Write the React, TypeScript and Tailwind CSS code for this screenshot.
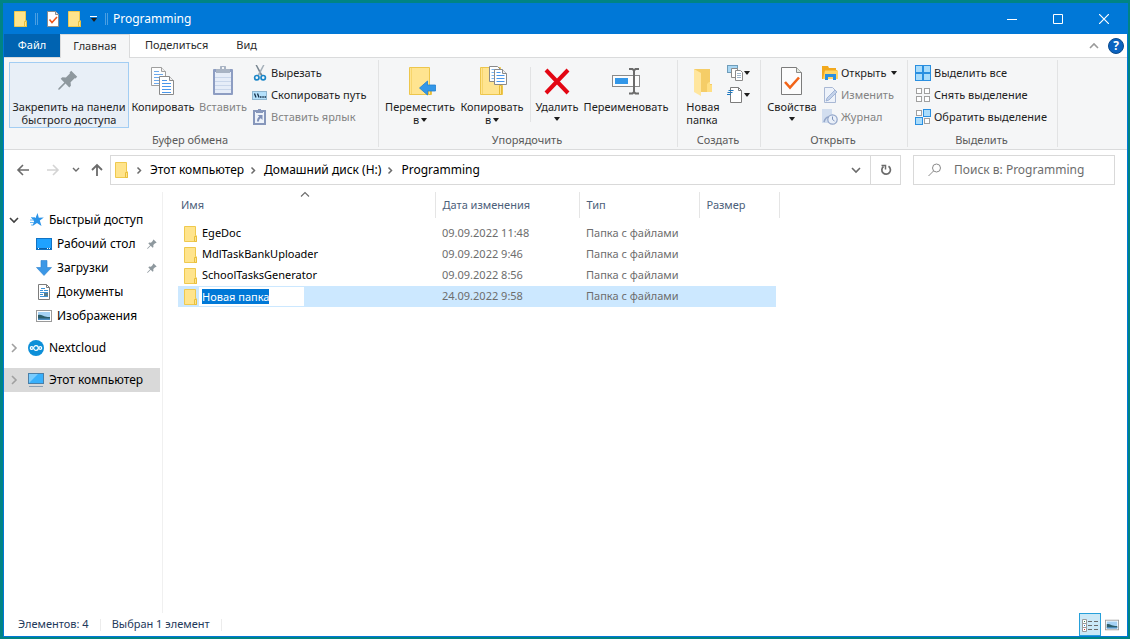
import { useEffect, useRef, type ReactNode } from "react";
import clsx from "clsx";

type IconProps = { className?: string };

const FolderIcon = ({ className = "w-4 h-4" }: IconProps) => (
  <svg viewBox="0 0 16 16" className={clsx("shrink-0", className)}>
    <path d="M1.5.5h11v9.3h1v5.7h-12z" fill="#ffe48c" stroke="#efc94e" />
    <path d="M11.5 15.5v-5h2v5z" fill="#ffe48c" stroke="#e9bf3c" />
  </svg>
);

const CheckDocIcon = ({ className = "w-4 h-4" }: IconProps) => (
  <svg viewBox="0 0 16 16" className={clsx("shrink-0", className)}>
    <path d="M2.5.5h8l3 3v12h-11z" fill="#fff" stroke="#8c8c8c" />
    <path d="M10.5.5v3h3" fill="#e8e8e8" stroke="#8c8c8c" />
    <path d="M4.5 8.5l2.5 3 5-5.5" fill="none" stroke="#f0551a" strokeWidth="1.6" />
  </svg>
);

const CaretDown = ({ className = "text-[#1e1e1e]" }: IconProps) => (
  <svg viewBox="0 0 6 4" className={clsx("w-[6px] h-1 shrink-0", className)}>
    <path d="M0 0h6L3.5 3.5h-1z" fill="currentColor" />
  </svg>
);

const Chevron = ({ className }: IconProps) => (
  <svg viewBox="0 0 10 10" className={clsx("w-[10px] h-[10px] shrink-0", className)}>
    <path d="M3 1l4 4-4 4" fill="none" stroke="currentColor" strokeWidth="1.6" />
  </svg>
);

const CrumbArrow = () => (
  <svg viewBox="0 0 10 10" className="w-[10px] h-[10px] mx-[5px] shrink-0 text-[#6b6b6b]">
    <path d="M2.5 2.5l3 3-3 3" fill="none" stroke="currentColor" strokeWidth="1.5" />
  </svg>
);

const PinShape = () => (
  <path
    d="M13.2.8l6 6-1.7 1.6-.9-.2-4 4 .3 3.6-1.6 1.6-3.8-3.8L1.6 19.4.2 19.7l.3-1.4 5.8-5.9-3.6-3.6 1.6-1.6 3.6.3 4-4-.3-1z"
    fill="#8e989e"
  />
);

const PinIcon = () => (
  <svg viewBox="0 0 32 32" className="w-8 h-8">
    <g transform="translate(5 4)">
      <PinShape />
    </g>
  </svg>
);

const SmallPinIcon = () => (
  <svg viewBox="0 0 20 20" className="w-[10px] h-[10px] shrink-0">
    <PinShape />
  </svg>
);

// one sheet with blue text lines, used twice by the copy icon
const Sheet = ({ x, y }: { x: number; y: number }) => (
  <g transform={`translate(${x} ${y})`}>
    <path d="M.5.5h10l4 4v14h-14z" fill="#fff" stroke="#8a8a8a" />
    <path d="M10.5.5v4h4" fill="#eee" stroke="#8a8a8a" />
    <path d="M3 4.5h5M3 7.5h9M3 10.5h9M3 13.5h9M3 16.5h9" stroke="#4a97ea" />
  </g>
);

const CopyIcon = () => (
  <svg viewBox="0 0 32 32" className="w-8 h-8">
    <g opacity=".8">
      <Sheet x={4} y={1} />
    </g>
    <Sheet x={12} y={10} />
  </svg>
);

const PasteIcon = () => (
  <svg viewBox="0 0 32 32" className="w-8 h-8">
    <rect x="6" y="3" width="20" height="26" rx="1" fill="#8d9dc2" />
    <rect x="8" y="6" width="16" height="21" fill="#e6edf8" />
    <path d="M8 11.5h16M8 15.5h16M8 19.5h16M8 23.5h16" stroke="#c9d6ea" />
    <path d="M9 3h4V1.5a2 2 0 0 1 6 0V3h4v4H9z" fill="#a9b4c4" />
    <rect x="15" y="1" width="2" height="2" fill="#f5f6f7" />
  </svg>
);

const ScissorsIcon = () => (
  <svg viewBox="0 0 16 16" className="w-4 h-4">
    <path d="M3.5 0H5l5.500 10L9 11z" fill="#76838e" />
    <path d="M12.500 0H11L5.500 10 7 11z" fill="#a3aeb8" />
    <circle cx="4.800" cy="12.700" r="2.200" fill="none" stroke="#1a86c8" strokeWidth="1.7" />
    <circle cx="11.200" cy="12.700" r="2.200" fill="none" stroke="#1a86c8" strokeWidth="1.7" />
  </svg>
);

const CopyPathIcon = () => (
  <svg viewBox="0 0 16 16" className="w-4 h-4">
    <rect x=".5" y="4.5" width="14" height="8" fill="#b4e0fb" stroke="#8fb6d0" />
    <path d="M2.5 6.5l1.5 4M5.5 6.5l1.5 4" stroke="#17324a" strokeWidth="1.3" />
    <path d="M8 10h1.5M10.3 10h1.5M12.5 10H14" stroke="#17324a" strokeWidth="1.3" />
  </svg>
);

const PasteShortcutIcon = () => (
  <svg viewBox="0 0 16 16" className="w-4 h-4">
    <path d="M2 2h11v13H2z" fill="#eef3fa" stroke="#8797bb" strokeWidth="2" />
    <path d="M4 1.5h2V0h3v1.5h2V4H4z" fill="#8797bb" />
    <path d="M5.5 6h5v5L8.8 9.3C7.5 10 7 11 7 12.5H5c0-2.500 1-4 2.300-4.900z" fill="#7f90b8" />
  </svg>
);

const MoveToIcon = () => (
  <svg viewBox="0 0 32 32" className="w-8 h-8">
    <path d="M5.5 1.5h20v18h2v9h-22z" fill="#ffe490" stroke="#edc64c" />
    <path d="M24.5 28.5v-9h2v9z" fill="#ffe490" stroke="#e6bb38" />
    <path d="M7.5 2v26" stroke="#f7d56c" />
    <path d="M15.500 22l8-7v4h8v6h-8v4z" fill="#3397e8" stroke="#2180d0" strokeWidth=".8" />
  </svg>
);

const CopyToIcon = () => (
  <svg viewBox="0 0 32 32" className="w-8 h-8">
    <path d="M4.5 1.5h20v18h2v9h-22z" fill="#ffe490" stroke="#edc64c" />
    <path d="M23.5 28.5v-9h2v9z" fill="#ffe490" stroke="#e6bb38" />
    <path d="M6.5 2v26" stroke="#f7d56c" />
    <path d="M13.5.5h8l3 3v12h-11z" fill="#fff" stroke="#8a8a8a" />
    <path d="M15.5 3.5h5M15.5 6.5h3M15.5 9.5h3M15.5 12.5h3" stroke="#7ab5f0" />
    <path d="M18.5 3.5h8l4 4v11h-12z" fill="#fff" stroke="#8a8a8a" />
    <path d="M26.5 3.5v4h4" fill="#eee" stroke="#8a8a8a" />
    <path d="M20.5 6.5h4M20.5 9.5h8M20.5 12.5h8M20.5 15.5h8" stroke="#4a97ea" />
  </svg>
);

const DeleteIcon = () => (
  <svg viewBox="0 0 32 32" className="w-8 h-8">
    <path d="M5 4l22 23M27 4L5 27" stroke="#e30613" strokeWidth="4" fill="none" />
  </svg>
);

const RenameIcon = () => (
  <svg viewBox="0 0 32 32" className="w-8 h-8">
    <rect x="2.5" y="9.5" width="27" height="11" fill="#fcfcfc" stroke="#8a8a8a" />
    <rect x="5" y="12" width="13" height="6" fill="#3397e8" />
    <path
      d="M19 3h3.500L24 4.500 25.500 3H29M24 4v22M19 27.500h3.500L24 26l1.500 1.500H29"
      fill="none"
      stroke="#6b6b6b"
      strokeWidth="2"
    />
  </svg>
);

const NewFolderIcon = () => (
  <svg viewBox="0 0 32 32" className="w-8 h-8">
    <path d="M7 3h16v15h2v8H7z" fill="#f5cd67" />
    <path d="M7 3l7 4v23l-7-4z" fill="#ffe69e" />
    <path d="M20 26v-8l2-2h1v3h2v7z" fill="#ffdf84" />
  </svg>
);

const NewItemIcon = () => (
  <svg viewBox="0 0 16 16" className="w-4 h-4">
    <rect x=".5" y=".5" width="10" height="7" fill="#a9d7f4" stroke="#6f9dba" />
    <path d="M4.5 3.5h6v9h-6z" fill="#fff" stroke="#8a8a8a" />
    <path d="M8.5 5.5h5l2 2v8h-7z" fill="#fff" stroke="#8a8a8a" />
    <path d="M10 8.5h4M10 10.5h4M10 12.5h4" stroke="#9fb6cc" />
  </svg>
);

const EasyAccessIcon = () => (
  <svg viewBox="0 0 16 16" className="w-4 h-4">
    <path d="M3.5.5h8l3 3v12h-11z" fill="#fff" stroke="#7c7c7c" />
    <path d="M11.5.5v3h3" fill="none" stroke="#7c7c7c" />
    <path d="M1.5 3.5h5M.5 5.5h5M0 7.5h4" stroke="#1e78c0" strokeWidth="1.2" />
  </svg>
);

const PropertiesIcon = () => (
  <svg viewBox="0 0 32 32" className="w-8 h-8">
    <path d="M5.5 1.5h15l5 5v22h-20z" fill="#fcfcfc" stroke="#7c7c7c" />
    <path d="M20.5 1.5v5h5" fill="#e4eadf" stroke="#8a8a8a" />
    <path d="M9 16l5 5.500 9-10" fill="none" stroke="#f26418" strokeWidth="2.6" />
  </svg>
);

const OpenIcon = () => (
  <svg viewBox="0 0 16 16" className="w-4 h-4">
    <path d="M0 1h6l1 2h7v2h1v9H0z" fill="#f2a91e" />
    <path d="M3 5.5h13V14H1z" fill="#ffd667" />
    <path d="M3 15V9h11v6h-3v-3H6v3z" fill="#2a8fe0" />
  </svg>
);

const EditIcon = () => (
  <svg viewBox="0 0 16 16" className="w-4 h-4">
    <path d="M2.5.5h8l3 3v12h-11z" fill="#edf2fa" stroke="#a9b8d4" />
    <path d="M4 14l1-3 8-8 2 2-8 8z" fill="#c3d2ea" stroke="#94a9cf" strokeWidth=".8" />
  </svg>
);

const HistoryIcon = () => (
  <svg viewBox="0 0 16 16" className="w-4 h-4">
    <path d="M0 0h10v14H0z" fill="#d2deef" />
    <circle cx="10.5" cy="10.5" r="4.7" fill="#e9eff8" stroke="#93a6c9" strokeWidth="1.2" />
    <path d="M10.5 7.5v3l2 1.5" fill="none" stroke="#7d92ba" />
    <path d="M2 13c1-4 3-5 5-5" fill="none" stroke="#93a6c9" strokeWidth="1.6" />
  </svg>
);

const Cell = ({ x, y, on }: { x: number; y: number; on: boolean }) =>
  on ? (
    <rect x={x + 0.5} y={y + 0.5} width="7" height="7" fill="#a9dcfb" stroke="#2a8fe0" />
  ) : (
    <rect x={x + 1.5} y={y + 1.5} width="5" height="5" fill="#fff" stroke="#a0a0a0" />
  );

const SelectGridIcon = ({ cells }: { cells: boolean[] }) => (
  <svg viewBox="0 0 16 16" className="w-4 h-4">
    <Cell x={0} y={0} on={cells[0]} />
    <Cell x={8} y={0} on={cells[1]} />
    <Cell x={0} y={8} on={cells[2]} />
    <Cell x={8} y={8} on={cells[3]} />
  </svg>
);

const StarIcon = () => (
  <svg viewBox="0 0 16 16" className="w-4 h-4">
    <path d="M9.5 1l1.300 4.700 5-.2-4 3.100 1.700 5.400-4.500-2.900L4.500 14l1.600-4.700L3.500 6l4 .1z" fill="#2a93e8" />
    <path d="M3 5.5h4M2 8h4M2 10.5h4M3 13h2" stroke="#6cb8f2" />
  </svg>
);

const DesktopIcon = () => (
  <svg viewBox="0 0 16 16" className="w-4 h-4">
    <rect x=".5" y="2.5" width="15" height="11" fill="#1fa2ff" stroke="#1173c4" />
    <path d="M1 12.5h14" stroke="#0b5fa8" />
    <path d="M2 12.5h1M11 12.5h1M13 12.5h1" stroke="#fff" />
  </svg>
);

const DownloadsIcon = () => (
  <svg viewBox="0 0 16 16" className="w-4 h-4">
    <path d="M5 .5h6v7h4.500L8 15.500.5 7.500H5z" fill="#3b97e6" stroke="#2a7fcf" strokeWidth=".6" />
  </svg>
);

const DocumentsIcon = () => (
  <svg viewBox="0 0 16 16" className="w-4 h-4">
    <path d="M2.5.5h8l3 3v12h-11z" fill="#fff" stroke="#7c7c7c" />
    <path d="M10.5.5v3h3" fill="none" stroke="#7c7c7c" />
    <path d="M5 4.5h4M4 6.5h3M8 6.5h4M4 8.5h8M4 10.5h3M4 12.5h8" stroke="#3d94d8" />
    <rect x="8" y="9" width="4" height="3" fill="#5a7d8a" />
  </svg>
);

const PicturesIcon = ({ className = "w-4 h-4" }: IconProps) => (
  <svg viewBox="0 0 16 16" className={className}>
    <rect x=".5" y="2.5" width="15" height="11" fill="#fff" stroke="#9a9a9a" />
    <path d="M2 4h12v8H2z" fill="#a5d2f5" />
    <path d="M2 7c3-1 5 1 7 1.500s3 .5 5 .5v2H2z" fill="#2c5d6a" />
    <path d="M2 10.5h12V12H2z" fill="#4d8fc4" />
  </svg>
);

const NextcloudIcon = () => (
  <svg viewBox="0 0 16 16" className="w-4 h-4">
    <circle cx="8" cy="8" r="8" fill="#0d8fd8" />
    <g fill="none" stroke="#fff" strokeWidth="1.2">
      <circle cx="3.7" cy="8" r="1.4" />
      <circle cx="8" cy="8" r="2.3" />
      <circle cx="12.3" cy="8" r="1.4" />
    </g>
  </svg>
);

const ComputerIcon = () => (
  <svg viewBox="0 0 16 16" className="w-4 h-4">
    <rect x=".5" y="1.5" width="15" height="10" fill="#39b0fb" stroke="#4a7fa8" />
    <path d="M1 11V2h9z" fill="#7accfd" />
    <path d="M1 14.5h14" stroke="#8a9fb2" />
  </svg>
);

const BigButton = ({
  icon,
  label,
  className,
  caret,
}: {
  icon: ReactNode;
  label: ReactNode;
  className?: string;
  caret?: boolean;
}) => (
  <button
    className={clsx(
      "flex flex-col items-center shrink-0 h-[66px] pt-[3px] border leading-[13px] whitespace-nowrap",
      className
    )}
  >
    {icon}
    <span className="mt-[2px]">{label}</span>
    {caret && <CaretDown className="mt-1 text-[#1e1e1e]" />}
  </button>
);

const SmallButton = ({
  icon,
  label,
  disabled,
  caret,
}: {
  icon: ReactNode;
  label: string;
  disabled?: boolean;
  caret?: boolean;
}) => (
  <button
    disabled={disabled}
    className="flex items-center gap-[3px] h-[22px] whitespace-nowrap disabled:text-[#838383]"
  >
    {icon}
    {label}
    {caret && <CaretDown className="ml-[2px] text-[#1e1e1e]" />}
  </button>
);

const RibbonGroup = ({
  title,
  className,
  children,
}: {
  title: string;
  className: string;
  children: ReactNode;
}) => (
  <section className={clsx("shrink-0 h-[87px] mt-[2px] pt-[2px] border-r border-[#e2e3e4]", className)}>
    <div className="flex items-start h-[71px] pl-[5px]">{children}</div>
    <h2 className="pr-[2px] leading-[14px] text-center text-[#5a5a5a]">{title}</h2>
  </section>
);

const TitleBar = () => (
  <header className="flex items-center h-[30px] bg-[#0078d7] text-white text-xs">
    <div className="flex items-center flex-1 pl-[9px]">
      <FolderIcon />
      <span className="ml-[6px] w-[3px] h-3 border-x border-[#4a9fe3]" />
      <button aria-label="Свойства" className="ml-[7px]">
        <CheckDocIcon />
      </button>
      <button aria-label="Новая папка" className="ml-[6px]">
        <FolderIcon />
      </button>
      <button aria-label="Настройка панели" className="ml-[7px] flex flex-col items-center gap-[1px] text-black">
        <span className="w-[7px] h-px bg-white" />
        <CaretDown />
      </button>
      <span className="ml-2 w-[3px] h-3 border-x border-[#4a9fe3]" />
      <h1 className="ml-[5px]">Programming</h1>
    </div>
    <button aria-label="Свернуть" className="w-[46px] h-full flex items-center justify-center">
      <svg viewBox="0 0 10 10" className="w-[10px] h-[10px]">
        <path d="M0 5.5h10" stroke="#fff" />
      </svg>
    </button>
    <button aria-label="Развернуть" className="w-[46px] h-full flex items-center justify-center">
      <svg viewBox="0 0 10 10" className="w-[10px] h-[10px]">
        <path d="M.5.5h9v9h-9z" fill="none" stroke="#fff" />
      </svg>
    </button>
    <button aria-label="Закрыть" className="w-[46px] h-full flex items-center justify-center">
      <svg viewBox="0 0 10 10" className="w-[10px] h-[10px]">
        <path d="M0 0l10 10M10 0L0 10" stroke="#fff" strokeWidth="1.2" />
      </svg>
    </button>
  </header>
);

const Tabs = () => (
  <nav className="flex h-6 bg-white text-[11px] text-[#2b2b2b]">
    <button className="w-14 bg-[#0063b1] text-white border-b border-[#dadbdc]">Файл</button>
    <button className="w-[70px] bg-[#f5f6f7] border border-b-0 border-[#dadbdc]">Главная</button>
    <div className="flex flex-1 items-center border-b border-[#dadbdc]">
      <button className="px-[15px]">Поделиться</button>
      <button className="px-[13px]">Вид</button>
      <button aria-label="Свернуть ленту" className="ml-auto mr-[9px]">
        <Chevron className="-rotate-90 text-[#9a9a9a]" />
      </button>
      <button
        aria-label="Справка"
        className="w-4 h-4 mr-[3px] rounded-full border border-[#0a4a8c] bg-[#0b63c0] text-white text-xs font-bold leading-[14px]"
      >
        ?
      </button>
    </div>
  </nav>
);

const Ribbon = () => (
  <div className="flex h-[92px] bg-[#f5f6f7] border-b border-[#dadbdc] text-[11px] text-[#1e1e1e] overflow-hidden">
    <RibbonGroup title="Буфер обмена" className="w-[375px]">
      <BigButton
        icon={<PinIcon />}
        label={
          <>
            Закрепить на панели
            <br />
            быстрого доступа
          </>
        }
        className="w-[120px] bg-[#e8eff7] border-[#a2cdf3]"
      />
      <BigButton icon={<CopyIcon />} label="Копировать" className="w-[68px] border-transparent" />
      <BigButton icon={<PasteIcon />} label="Вставить" className="w-[52px] border-transparent text-[#838383]" />
      <div className="ml-[3px]">
        <SmallButton icon={<ScissorsIcon />} label="Вырезать" />
        <SmallButton icon={<CopyPathIcon />} label="Скопировать путь" />
        <SmallButton icon={<PasteShortcutIcon />} label="Вставить ярлык" disabled />
      </div>
    </RibbonGroup>

    <RibbonGroup title="Упорядочить" className="w-[299px]">
      <BigButton
        icon={<MoveToIcon />}
        label={
          <>
            Переместить
            <br />
            <span className="inline-flex items-center gap-[2px]">
              в <CaretDown />
            </span>
          </>
        }
        className="w-[72px] border-transparent"
      />
      <BigButton
        icon={<CopyToIcon />}
        label={
          <>
            Копировать
            <br />
            <span className="inline-flex items-center gap-[2px]">
              в <CaretDown />
            </span>
          </>
        }
        className="w-[72px] border-transparent"
      />
      <span className="w-px h-[55px] mt-[5px] mx-[2px] bg-[#e2e3e4]" />
      <BigButton icon={<DeleteIcon />} label="Удалить" className="w-12 border-transparent" caret />
      <BigButton icon={<RenameIcon />} label="Переименовать" className="w-[90px] border-transparent" />
    </RibbonGroup>

    <RibbonGroup title="Создать" className="w-[83px]">
      <BigButton
        icon={<NewFolderIcon />}
        label={
          <>
            Новая
            <br />
            папка
          </>
        }
        className="w-10 border-transparent text-left"
      />
      <div className="ml-1">
        <button aria-label="Создать элемент" className="flex items-center gap-[1px] h-[22px]">
          <NewItemIcon />
          <CaretDown />
        </button>
        <button aria-label="Простой доступ" className="flex items-center gap-[1px] h-[22px]">
          <EasyAccessIcon />
          <CaretDown />
        </button>
      </div>
    </RibbonGroup>

    <RibbonGroup title="Открыть" className="w-[147px]">
      <BigButton icon={<PropertiesIcon />} label="Свойства" className="w-[52px] border-transparent" caret />
      <div className="ml-1">
        <SmallButton icon={<OpenIcon />} label="Открыть" caret />
        <SmallButton icon={<EditIcon />} label="Изменить" disabled />
        <SmallButton icon={<HistoryIcon />} label="Журнал" disabled />
      </div>
    </RibbonGroup>

    <RibbonGroup title="Выделить" className="w-[150px]">
      <div className="pl-[2px]">
        <SmallButton icon={<SelectGridIcon cells={[true, true, true, true]} />} label="Выделить все" />
        <SmallButton icon={<SelectGridIcon cells={[false, false, false, false]} />} label="Снять выделение" />
        <SmallButton icon={<SelectGridIcon cells={[false, true, true, false]} />} label="Обратить выделение" />
      </div>
    </RibbonGroup>
  </div>
);

const crumbs = ["Этот компьютер", "Домашний диск (H:)", "Programming"];

const AddressRow = () => (
  <div className="flex items-start h-[42px] pt-[5px] pr-3 text-xs">
    <div className="flex items-center h-[30px] w-[106px] shrink-0 pl-3 text-[#6b6b6b]">
      <button aria-label="Назад">
        <svg viewBox="0 0 14 14" className="w-[14px] h-[14px]">
          <path d="M13 7H2M7 2L2 7l5 5" fill="none" stroke="currentColor" strokeWidth="1.6" />
        </svg>
      </button>
      <button aria-label="Вперед" disabled className="ml-4 text-[#d4d4d4]">
        <svg viewBox="0 0 14 14" className="w-[14px] h-[14px]">
          <path d="M1 7h11M7 2l5 5-5 5" fill="none" stroke="currentColor" strokeWidth="1.6" />
        </svg>
      </button>
      <button aria-label="Последние расположения" className="ml-3">
        <svg viewBox="0 0 8 8" className="w-2 h-2">
          <path d="M1 2l3 3 3-3" fill="none" stroke="currentColor" strokeWidth="1.4" />
        </svg>
      </button>
      <button aria-label="Вверх" className="ml-[10px]">
        <svg viewBox="0 0 14 14" className="w-[14px] h-[14px]">
          <path d="M7 13V2M2 7l5-5 5 5" fill="none" stroke="currentColor" strokeWidth="1.8" />
        </svg>
      </button>
    </div>

    <div className="flex flex-1 items-center h-[30px] border border-[#d9d9d9]">
      <FolderIcon className="w-4 h-4 ml-[3px]" />
      {crumbs.map((crumb) => (
        <div key={crumb} className="flex items-center">
          <CrumbArrow />
          <a href="#" className="text-black whitespace-nowrap">
            {crumb}
          </a>
        </div>
      ))}
      <button aria-label="Предыдущие расположения" className="ml-auto mr-[9px]">
        <Chevron className="rotate-90 text-[#6b6b6b]" />
      </button>
      <button
        aria-label="Обновить"
        className="flex items-center justify-center w-[30px] h-full border-l border-[#d9d9d9] text-[#6b6b6b]"
      >
        <svg viewBox="0 0 12 12" className="w-3 h-3">
          <path d="M8.5 2.3A4.3 4.3 0 1 1 3.5 2.5" fill="none" stroke="currentColor" strokeWidth="1.7" />
          <path d="M1.5 1.5h4v4" fill="none" stroke="currentColor" strokeWidth="1.5" />
        </svg>
      </button>
    </div>

    <label className="flex items-center w-[202px] h-[30px] ml-3 pl-[14px] border border-[#d9d9d9]">
      <svg viewBox="0 0 14 14" className="w-[14px] h-[14px] shrink-0">
        <circle cx="8.5" cy="5" r="4" fill="none" stroke="#8a8a8a" />
        <path d="M5.5 8L.5 13" stroke="#8a8a8a" />
      </svg>
      <input
        type="search"
        aria-label="Поиск"
        placeholder="Поиск в: Programming"
        className="ml-3 w-full min-w-0 outline-none placeholder:text-[#6d6d6d]"
      />
    </label>
  </div>
);

const quickAccess = [
  { name: "Рабочий стол", icon: <DesktopIcon />, pinned: true },
  { name: "Загрузки", icon: <DownloadsIcon />, pinned: true },
  { name: "Документы", icon: <DocumentsIcon />, pinned: false },
  { name: "Изображения", icon: <PicturesIcon />, pinned: false },
];

const TreeRoot = ({
  name,
  icon,
  open,
  selected,
}: {
  name: string;
  icon: ReactNode;
  open?: boolean;
  selected?: boolean;
}) => (
  <a href="#" className={clsx("flex items-center h-6 pl-[5px] mr-[2px]", selected && "bg-[#d9d9d9]")}>
    <Chevron className={open ? "rotate-90 text-[#404040]" : "text-[#a0a0a0]"} />
    <span className="ml-[9px] mr-[5px]">{icon}</span>
    {name}
  </a>
);

const Sidebar = () => (
  <aside className="w-[159px] shrink-0 pt-4 border-r border-[#f0f0f0] text-xs text-black">
    <TreeRoot name="Быстрый доступ" icon={<StarIcon />} open />
    {quickAccess.map((item) => (
      <a key={item.name} href="#" className="flex items-center h-6 pl-8 pr-[5px]">
        <span className="mr-[5px]">{item.icon}</span>
        {item.name}
        {item.pinned && (
          <span className="ml-auto">
            <SmallPinIcon />
          </span>
        )}
      </a>
    ))}
    <div className="mt-2">
      <TreeRoot name="Nextcloud" icon={<NextcloudIcon />} />
    </div>
    <div className="mt-2">
      <TreeRoot name="Этот компьютер" icon={<ComputerIcon />} selected />
    </div>
  </aside>
);

const files = [
  { name: "EgeDoc", date: "09.09.2022 11:48", editing: false },
  { name: "MdlTaskBankUploader", date: "09.09.2022 9:46", editing: false },
  { name: "SchoolTasksGenerator", date: "09.09.2022 8:56", editing: false },
  { name: "Новая папка", date: "24.09.2022 9:58", editing: true },
];

const FileTable = () => {
  const renameRef = useRef<HTMLInputElement>(null);

  useEffect(() => {
    renameRef.current?.focus();
    renameRef.current?.select();
  }, []);

  return (
    <main className="flex-1 pl-[15px]">
      <table className="table-fixed w-[601px] text-[11px] text-left">
        <colgroup>
          <col className="w-[257px]" />
          <col className="w-36" />
          <col className="w-[120px]" />
          <col className="w-[77px]" />
          <col className="w-[3px]" />
        </colgroup>
        <thead className="text-[#4c607a]">
          <tr className="h-[26px]">
            <th className="relative pl-[3px] font-normal border-r border-[#e5e5e5]">
              Имя
              <svg viewBox="0 0 10 10" className="absolute -top-[2px] left-1/2 -ml-[6px] w-[10px] h-[10px]">
                <path d="M1 6.5l4-4 4 4" fill="none" stroke="#6b6b6b" strokeWidth="1.1" />
              </svg>
            </th>
            <th className="pl-[7px] font-normal border-r border-[#e5e5e5]">Дата изменения</th>
            <th className="pl-[7px] font-normal border-r border-[#e5e5e5]">Тип</th>
            <th colSpan={2} className="pl-[7px] font-normal border-r border-[#e5e5e5]">
              Размер
            </th>
          </tr>
        </thead>
        <tbody className="text-[#6d6d6d] before:block before:h-[5px]">
          {files.map((file) => (
            <tr key={file.name} className="h-[21px]">
              <td className={clsx("p-0", file.editing && "bg-[#cce8ff]")}>
                <div className="flex items-center pl-[5px] text-black">
                  <FolderIcon />
                  {file.editing ? (
                    <input
                      ref={renameRef}
                      aria-label="Имя папки"
                      defaultValue={file.name}
                      className="w-[105px] h-[19px] pl-[3px] bg-white outline-none selection:bg-[#0078d7] selection:text-white"
                    />
                  ) : (
                    <span className="pl-[3px]">{file.name}</span>
                  )}
                </div>
              </td>
              <td className={clsx("p-0 pl-[7px]", file.editing && "bg-[#cce8ff]")}>{file.date}</td>
              <td className={clsx("p-0 pl-[7px]", file.editing && "bg-[#cce8ff]")}>Папка с файлами</td>
              <td className={clsx("p-0", file.editing && "bg-[#cce8ff]")} />
              <td className="p-0" />
            </tr>
          ))}
        </tbody>
      </table>
    </main>
  );
};

const StatusBar = () => (
  <footer className="flex items-center h-[23px] pl-[14px] pr-2 text-[11px] text-[#1e395b]">
    <span>Элементов: 4</span>
    <span className="w-px h-3 mx-[11px] bg-[#ececec]" />
    <span>Выбран 1 элемент</span>
    <span className="w-px h-3 mx-[11px] bg-[#ececec]" />
    <button
      aria-label="Таблица"
      className="ml-auto flex items-center justify-center w-[22px] h-[23px] border border-[#26a0da] bg-[#cbe8f6]"
    >
      <svg viewBox="0 0 16 14" className="w-4 h-[14px]">
        <path d="M.5 1.5h4v4h-4zM.5 5.5h4v4h-4zM.5 9.5h4v4h-4z" fill="#fff" stroke="#9a9a9a" />
        <path d="M6 3.5h4M12 3.5h4M6 7.5h4M12 7.5h4M6 11.5h4M12 11.5h4" stroke="#6b6b6b" />
        <path d="M2 3.5h1" stroke="#3a8a5a" />
        <path d="M2 7.5h1" stroke="#2a7fcf" />
        <path d="M2 11.5h1" stroke="#d03030" />
      </svg>
    </button>
    <button aria-label="Крупные значки" className="ml-1">
      <PicturesIcon className="w-[14px] h-[14px]" />
    </button>
  </footer>
);

export default function App() {
  return (
    <div className="flex flex-col min-h-screen pt-[3px] pl-[3px] pr-[2px] pb-[2px] bg-[#008484] font-['Noto_Sans',sans-serif]">
      <div className="flex flex-col flex-1 border border-[#0078d7] bg-white">
        <TitleBar />
        <Tabs />
        <Ribbon />
        <AddressRow />
        <div className="flex flex-1">
          <Sidebar />
          <FileTable />
        </div>
        <StatusBar />
      </div>
    </div>
  );
}
